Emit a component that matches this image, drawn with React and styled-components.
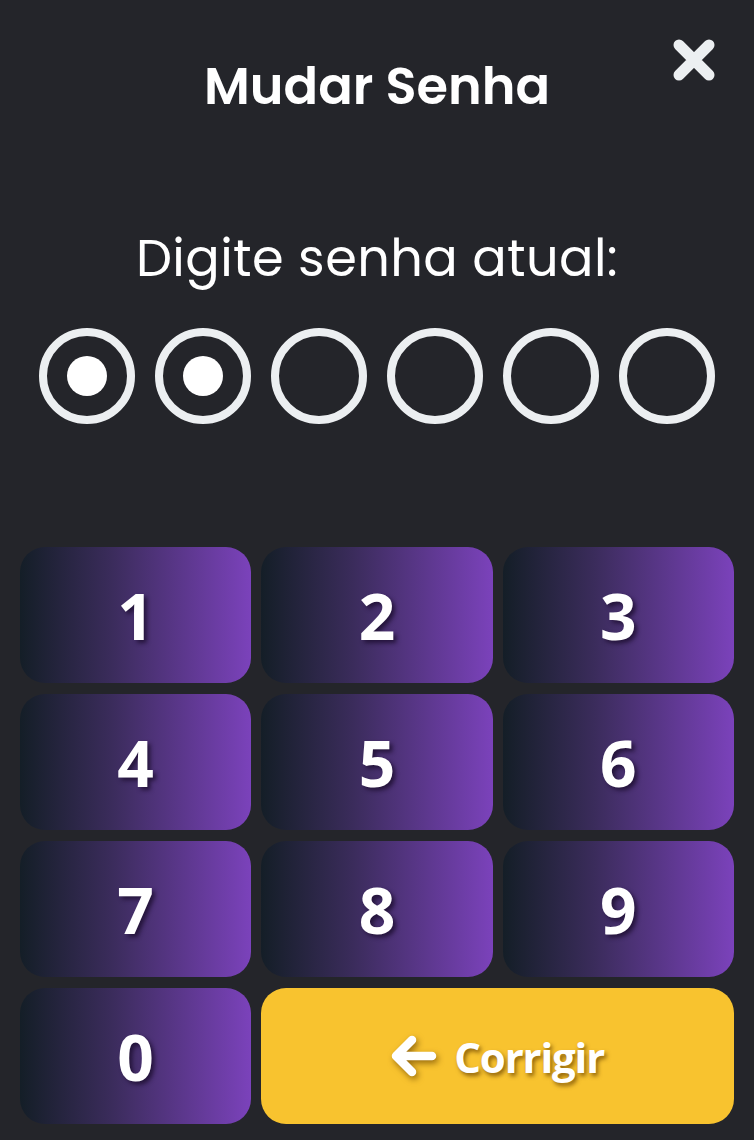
import React from "react"
import styled, { createGlobalStyle } from "styled-components"

const GlobalStyle = createGlobalStyle`
  html, body {
    margin: 0;
    padding: 0;
    background: #24252a;
  }
`

const Screen = styled.div`
  position: relative;
  width: 754px;
  min-height: 1140px;
  box-sizing: border-box;
  display: flex;
  flex-direction: column;
  align-items: center;
  background: #24252a;
  font-family: "Poppins", "Inter", "Open Sans", sans-serif;
  color: #fff;
`

const CloseButton = styled.button`
  position: absolute;
  top: 38px;
  right: 38px;
  width: 44px;
  height: 44px;
  padding: 0;
  border: none;
  background: none;
  cursor: pointer;
`

const Title = styled.h1`
  margin: 61px 0 0;
  font-size: 51px;
  line-height: 1;
  font-weight: 600;
`

const Prompt = styled.p`
  margin: 121px 0 0;
  font-size: 51px;
  line-height: 1;
  font-weight: 400;
  letter-spacing: 0.4px;
`

const Dots = styled.div`
  display: flex;
  gap: 20px;
  margin-top: 44px;
`

const Dot = styled.div`
  width: 96px;
  height: 96px;
  box-sizing: border-box;
  border: 8px solid #eceff1;
  border-radius: 50%;
  display: flex;
  align-items: center;
  justify-content: center;

  &::after {
    content: "";
    display: ${props => (props.$filled ? "block" : "none")};
    width: 40px;
    height: 40px;
    border-radius: 50%;
    background: #fff;
  }
`

const Keypad = styled.div`
  display: grid;
  grid-template-columns: repeat(3, 1fr);
  grid-auto-rows: 136px;
  gap: 11px 10px;
  width: 100%;
  box-sizing: border-box;
  padding: 0 20px;
  margin-top: 123px;
`

const Key = styled.button`
  grid-column: span ${props => props.$span || 1};
  border: none;
  border-radius: 25px;
  display: flex;
  align-items: center;
  justify-content: center;
  gap: 17px;
  color: #fff;
  font-family: "Open Sans", "Noto Sans", sans-serif;
  font-weight: 700;
  font-size: ${props => (props.$yellow ? "42px" : "64px")};
  letter-spacing: ${props => (props.$yellow ? "-1.2px" : "0")};
  background: ${props =>
    props.$yellow
      ? "#f8c32f"
      : "linear-gradient(to right, #141e27 0%, #3b2c5c 40%, #7b42bb 100%)"};
  text-shadow: ${props =>
    props.$yellow
      ? "2px 3px 4px rgba(110, 70, 0, 0.75)"
      : "3px 3px 4px rgba(30, 15, 50, 0.85)"};
  cursor: pointer;

  svg {
    filter: drop-shadow(2px 3px 3px rgba(110, 70, 0, 0.7));
  }
`

const CloseIcon = () => (
  <svg width="44" height="44" viewBox="0 0 44 44">
    <path
      d="M7 7L37 37M37 7L7 37"
      stroke="#eceff1"
      strokeWidth="11"
      strokeLinecap="round"
      fill="none"
    />
  </svg>
)

const BackArrow = () => (
  <svg width="46" height="42" viewBox="0 0 46 42">
    <path
      d="M41 21H6M21 5L5 21L21 37"
      stroke="#fff"
      strokeWidth="8.5"
      strokeLinecap="round"
      strokeLinejoin="round"
      fill="none"
    />
  </svg>
)

const entered = 2
const digits = ["1", "2", "3", "4", "5", "6", "7", "8", "9"]

const App = () => (
  <Screen>
    <GlobalStyle />
    <CloseButton aria-label="Fechar">
      <CloseIcon />
    </CloseButton>
    <Title>Mudar Senha</Title>
    <Prompt>Digite senha atual:</Prompt>
    <Dots>
      {[0, 1, 2, 3, 4, 5].map(i => (
        <Dot key={i} $filled={i < entered} />
      ))}
    </Dots>
    <Keypad>
      {digits.map(d => (
        <Key key={d}>{d}</Key>
      ))}
      <Key>0</Key>
      <Key $span={2} $yellow>
        <BackArrow />
        Corrigir
      </Key>
    </Keypad>
  </Screen>
)

export default App
